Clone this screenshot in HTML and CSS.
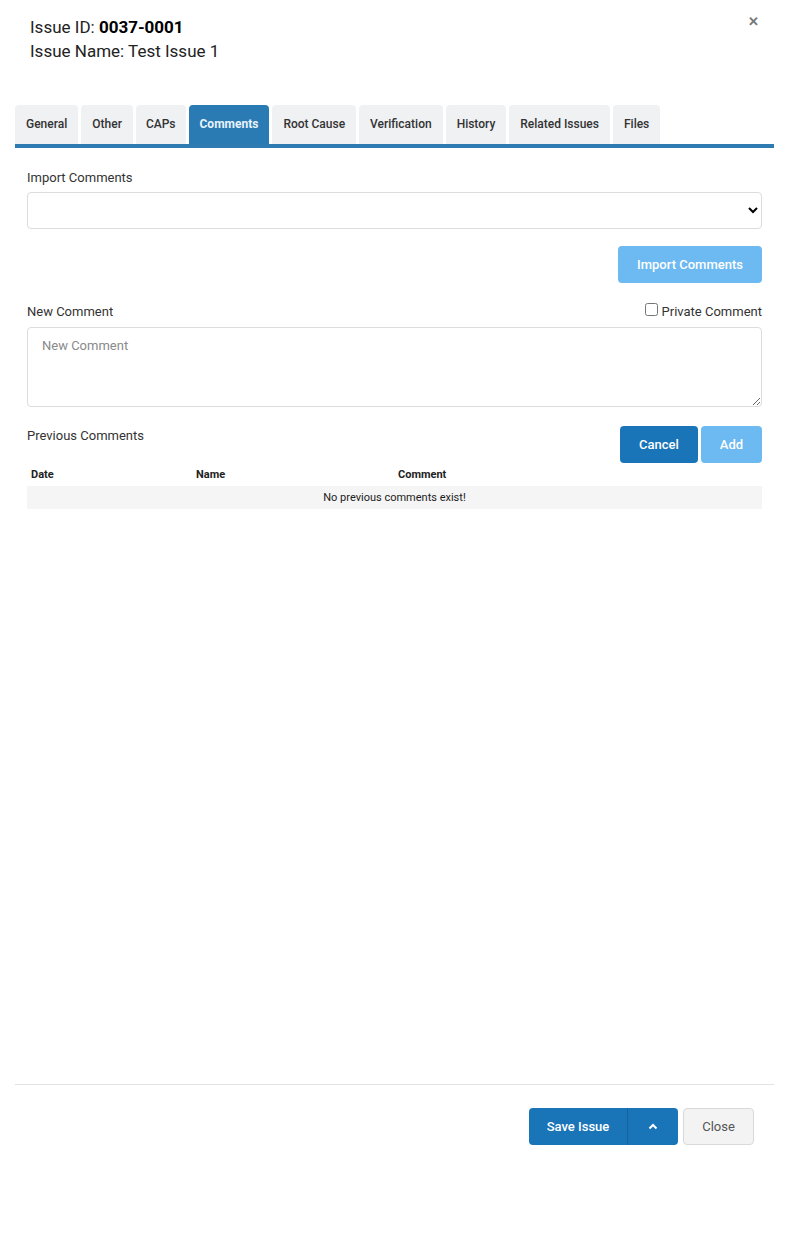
FILE: index.html
```html
<!DOCTYPE html>
<html>
<head>
<meta charset="utf-8">
<link rel="stylesheet" href="styles.css">
</head>
<body>
<div class="modal">
  <div class="modal-header">
    <div class="titles">
      <div class="title">Issue ID: <b>0037-0001</b></div>
      <div class="title">Issue Name: Test Issue 1</div>
    </div>
    <span class="close-x">&#x2715;</span>
  </div>
  <div class="tabs">
    <div class="tab">General</div>
    <div class="tab">Other</div>
    <div class="tab caps">CAPs</div>
    <div class="tab active">Comments</div>
    <div class="tab">Root Cause</div>
    <div class="tab">Verification</div>
    <div class="tab">History</div>
    <div class="tab">Related Issues</div>
    <div class="tab">Files</div>
  </div>
  <div class="tab-content">
    <label class="label">Import Comments</label>
    <select class="select"><option></option></select>
    <div class="right-row">
      <button class="btn btn-light">Import Comments</button>
    </div>
    <div class="label-row">
      <label class="label">New Comment</label>
      <label class="check"><input type="checkbox"> Private Comment</label>
    </div>
    <textarea class="textarea" placeholder="New Comment"></textarea>
    <div class="prev-row">
      <span class="label">Previous Comments</span>
      <div class="btn-group">
        <button class="btn btn-primary">Cancel</button>
        <button class="btn btn-light">Add</button>
      </div>
    </div>
    <table class="table">
      <thead>
        <tr><th class="c-date">Date</th><th class="c-name">Name</th><th>Comment</th></tr>
      </thead>
      <tbody>
        <tr><td colspan="3" class="empty">No previous comments exist!</td></tr>
      </tbody>
    </table>
  </div>
  <div class="modal-footer">
    <div class="split">
      <button class="btn btn-primary save">Save Issue</button>
      <button class="btn btn-primary caret"><svg width="10" height="7" viewBox="0 0 10 7"><path d="M1.5 5.5 L5 2 L8.5 5.5" fill="none" stroke="#fff" stroke-width="2"/></svg></button>
    </div>
    <button class="btn btn-default">Close</button>
  </div>
</div>
</body>
</html>
```
FILE: styles.css
```css
* { box-sizing: border-box; }
body {
  margin: 0;
  background: #fff;
  font-family: Roboto, "Liberation Sans", Arial, sans-serif;
  color: #333;
}
.modal {
  width: 789px;
  padding: 0 15px;
}
.modal-header {
  display: flex;
  justify-content: space-between;
  padding: 15px 15px 0 15px;
  height: 105px;
}
.title {
  font-size: 17px;
  line-height: 24px;
  color: #222;
}
.title b { font-weight: 700; color: #000; }
.close-x {
  font-size: 13px;
  font-weight: 700;
  color: #777;
  margin-top: 0;
  line-height: 14px;
}
.tabs {
  display: flex;
  gap: 3px;
  border-bottom: 4px solid #2d7bb0;
}
.tab {
  height: 39px;
  line-height: 39px;
  padding: 0 11px;
  font-size: 12px;
  font-weight: 500;
  color: #333;
  background: #f0f1f3;
  border-radius: 4px 4px 0 0;
}
.tab.caps { padding: 0 10px; }
.tab.active {
  background: #2a7ab4;
  color: #e8f3fc;
  font-weight: 700;
  padding: 0 11px;
}
.tab-content {
  height: 936px;
  padding: 20px 12px;
  display: flex;
  flex-direction: column;
}
.label {
  font-size: 13px;
  line-height: 18px;
  color: #333;
}
.tab-content > .label:first-child { margin-top: 1px; }
.select {
  margin-top: 5px;
  height: 37px;
  border: 1px solid #dcdcdc;
  border-radius: 4px;
  background: #fff;
  width: 100%;
  font-size: 13px;
  padding: 0 8px;
}
.right-row {
  display: flex;
  justify-content: flex-end;
  margin-top: 17px;
}
.btn {
  height: 37px;
  border: none;
  border-radius: 4px;
  font-family: Roboto, "Liberation Sans", Arial, sans-serif;
  font-size: 13px;
  font-weight: 500;
  color: #fff;
  padding: 0 19px;
  cursor: pointer;
}
.btn-light { background: #6db9f2; }
.btn-primary { background: #1a74b8; }
.btn-default {
  background: #f3f3f3;
  border: 1px solid #d9d9d9;
  color: #555;
  font-weight: 400;
}
.right-row .btn { width: 144px; }
.label-row {
  display: flex;
  justify-content: space-between;
  align-items: flex-end;
  margin-top: 20px;
}
.check {
  font-size: 13px;
  line-height: 18px;
  color: #333;
  display: flex;
  align-items: center;
}
.check input {
  margin: 0 4px 5px 0;
  width: 13px;
  height: 13px;
}
.textarea {
  margin-top: 6px;
  height: 80px;
  width: 100%;
  border: 1px solid #dcdcdc;
  border-radius: 4px;
  padding: 10px 14px;
  font-family: Roboto, "Liberation Sans", Arial, sans-serif;
  font-size: 13px;
  resize: vertical;
}
.textarea::placeholder { color: #8a8a8a; }
.prev-row {
  display: flex;
  justify-content: space-between;
  align-items: flex-start;
  margin-top: 19px;
}
.prev-row .label { margin-top: 1px; }
.btn-group { display: flex; gap: 3px; }
.btn-group .btn-primary { width: 78px; padding: 0; }
.btn-group .btn-light { width: 61px; padding: 0; }
.table {
  width: 100%;
  border-collapse: collapse;
  font-size: 11px;
}
.table th {
  text-align: left;
  font-weight: 700;
  color: #222;
  height: 23px;
  padding: 0 4px;
}
.c-date { width: 165px; }
.c-name { width: 202px; }
.table td.empty {
  background: #f5f5f5;
  text-align: center;
  height: 23px;
  color: #222;
}
.modal-footer {
  border-top: 1px solid #e3e3e3;
  display: flex;
  justify-content: flex-end;
  gap: 5px;
  padding: 23px 20px 0 0;
}
.split { display: flex; }
.split .save {
  width: 99px;
  padding: 0;
  border-radius: 4px 0 0 4px;
  border-right: 1px solid #15629c;
}
.split .caret {
  width: 50px;
  padding: 0;
  border-radius: 0 4px 4px 0;
  display: flex;
  align-items: center;
  justify-content: center;
}
.btn-default { width: 71px; padding: 0; }
```
